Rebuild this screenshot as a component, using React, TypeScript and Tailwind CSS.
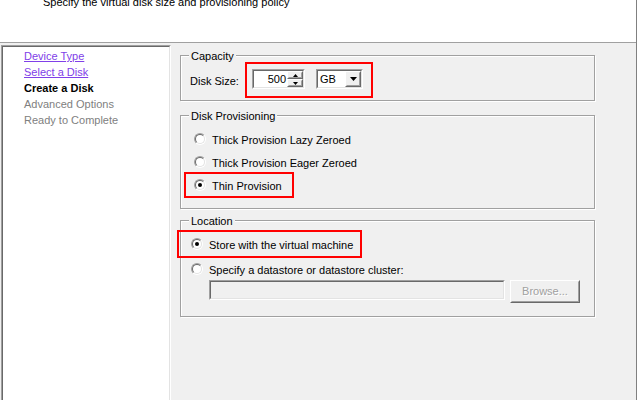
import React from "react";

function Sunken({ className = "", inner = "", children }: { className?: string; inner?: string; children?: React.ReactNode }) {
  return (
    <div className={`border border-t-[#a0a0a0] border-l-[#a0a0a0] border-r-white border-b-white ${className}`}>
      <div className={`h-full w-full border border-t-[#696969] border-l-[#696969] border-r-[#e3e3e3] border-b-[#e3e3e3] ${inner}`}>{children}</div>
    </div>
  );
}

function Raised({ className = "", inner = "", children }: { className?: string; inner?: string; children?: React.ReactNode }) {
  return (
    <div className={`border border-t-white border-l-white border-r-[#696969] border-b-[#696969] bg-[#f0f0f0] ${className}`}>
      <div className={`h-full w-full border border-t-[#f0f0f0] border-l-[#f0f0f0] border-r-[#a0a0a0] border-b-[#a0a0a0] ${inner}`}>{children}</div>
    </div>
  );
}

function Radio({ checked = false }: { checked?: boolean }) {
  return (
    <div className="w-[12px] h-[12px] shrink-0 rounded-full border border-t-[#a0a0a0] border-l-[#a0a0a0] border-r-white border-b-white">
      <div className="w-full h-full rounded-full border border-t-[#696969] border-l-[#696969] border-r-[#e3e3e3] border-b-[#e3e3e3] bg-white flex items-center justify-center">
        {checked && <div className="w-[4px] h-[4px] rounded-full bg-black" />}
      </div>
    </div>
  );
}

function Group({ title, className = "", children }: { title: string; className?: string; children?: React.ReactNode }) {
  return (
    <div className={`relative w-[415px] border border-[#a0a0a0] shadow-[1px_1px_0_#ffffff,inset_1px_1px_0_#ffffff] ${className}`}>
      <span className="absolute left-[8px] -top-[6px] px-[2px] bg-[#f0f0f0] leading-[13px]">{title}</span>
      {children}
    </div>
  );
}

export default function App() {
  return (
    <div className="w-[638px] h-[400px] flex bg-white overflow-hidden font-['Liberation_Sans',Arial,sans-serif] text-[11px] leading-[13px] text-black">
      <div className="w-[636px] h-full flex flex-col">
        <header className="h-[43px] shrink-0 border-b border-[#a0a0a0] bg-white pl-[43px]">
          <p className="-mt-[4px] whitespace-nowrap">Specify the virtual disk size and provisioning policy</p>
        </header>
        <div className="flex-1 flex bg-[#f0f0f0] min-h-0">
          <div className="mt-[2px] ml-[1px] w-[170px] border-t border-l border-r border-t-[#a0a0a0] border-l-[#a0a0a0] border-r-white">
            <div className="h-full border-t border-l border-r border-t-[#696969] border-l-[#696969] border-r-[#e3e3e3] bg-white pt-[1px] pl-[21px] flex flex-col">
              <a className="leading-[16px] underline text-[#8040e8] w-fit">Device Type</a>
              <a className="leading-[16px] underline text-[#8040e8] w-fit">Select a Disk</a>
              <span className="leading-[16px] font-bold">Create a Disk</span>
              <span className="leading-[16px] text-[#808080]">Advanced Options</span>
              <span className="leading-[16px] text-[#808080]">Ready to Complete</span>
            </div>
          </div>
          <div className="pl-[9px] pt-[12px] flex flex-col">
            <Group title="Capacity" className="pl-[9px] pt-[6px] pb-[2px]">
              <div className="flex items-center">
                <span className="w-[55px] pt-[2px]">Disk Size:</span>
                <div className="flex border-2 border-[#ff0000] pl-[5px] pr-[8px] pt-[5px] pb-[7px] gap-[11px]">
                  <Sunken className="w-[53px] h-[20px]" inner="flex bg-white">
                    <div className="flex-1 flex items-center justify-end pr-[1px] pt-[1px]">500</div>
                    <div className="w-[16px] flex flex-col">
                      <Raised className="h-[8px]" inner="flex items-center justify-center">
                        <svg width="5" height="3" viewBox="0 0 5 3"><polygon points="2.5,0 5,3 0,3" fill="#000" /></svg>
                      </Raised>
                      <Raised className="h-[8px]" inner="flex items-center justify-center">
                        <svg width="5" height="3" viewBox="0 0 5 3"><polygon points="0,0 5,0 2.5,3" fill="#000" /></svg>
                      </Raised>
                    </div>
                  </Sunken>
                  <Sunken className="w-[47px] h-[20px]" inner="flex bg-white">
                    <div className="flex-1 flex items-center pl-[2px] pt-[1px]">GB</div>
                    <Raised className="w-[16px] h-full" inner="flex items-center justify-center">
                      <svg width="7" height="4" viewBox="0 0 7 4"><polygon points="0,0 7,0 3.5,4" fill="#000" /></svg>
                    </Raised>
                  </Sunken>
                </div>
              </div>
            </Group>

            <Group title="Disk Provisioning" className="mt-[14px] pt-[13px] pb-[10px] flex flex-col">
              <div className="h-[20px] flex items-center gap-[6px] pl-[13px]">
                <Radio />
                <span className="pt-[2px]">Thick Provision Lazy Zeroed</span>
              </div>
              <div className="h-[20px] mt-[3px] flex items-center gap-[6px] pl-[13px]">
                <Radio />
                <span className="pt-[2px]">Thick Provision Eager Zeroed</span>
              </div>
              <div className="w-[110px] h-[26px] ml-[3px] border-2 border-[#ff0000] flex items-center gap-[6px] pl-[8px]">
                <Radio checked />
                <span className="pt-[2px]">Thin Provision</span>
              </div>
            </Group>

            <Group title="Location" className="mt-[11px] pt-[9px] pb-[13px] flex flex-col">
              <div className="relative z-10 w-[185px] h-[28px] -ml-[4px] border-2 border-[#ff0000] flex items-center gap-[6px] pl-[12px]">
                <Radio checked />
                <span className="pt-[2px]">Store with the virtual machine</span>
              </div>
              <div className="h-[20px] mt-[1px] flex items-center gap-[6px] pl-[10px]">
                <Radio />
                <span className="pt-[2px]">Specify a datastore or datastore cluster:</span>
              </div>
              <div className="mt-[1px] pl-[28px] flex items-start gap-[5px]">
                <Sunken className="w-[296px] h-[20px]" inner="bg-[#f0f0f0]" />
                <Raised className="w-[70px] h-[23px]" inner="flex items-center justify-center">
                  <span className="text-[#a0a0a0] [text-shadow:1px_1px_0_#ffffff]">Browse...</span>
                </Raised>
              </div>
            </Group>
          </div>
        </div>
      </div>
      <div className="w-[1px] h-full bg-[#808080]" />
      <div className="w-[1px] h-full bg-white" />
    </div>
  );
}
